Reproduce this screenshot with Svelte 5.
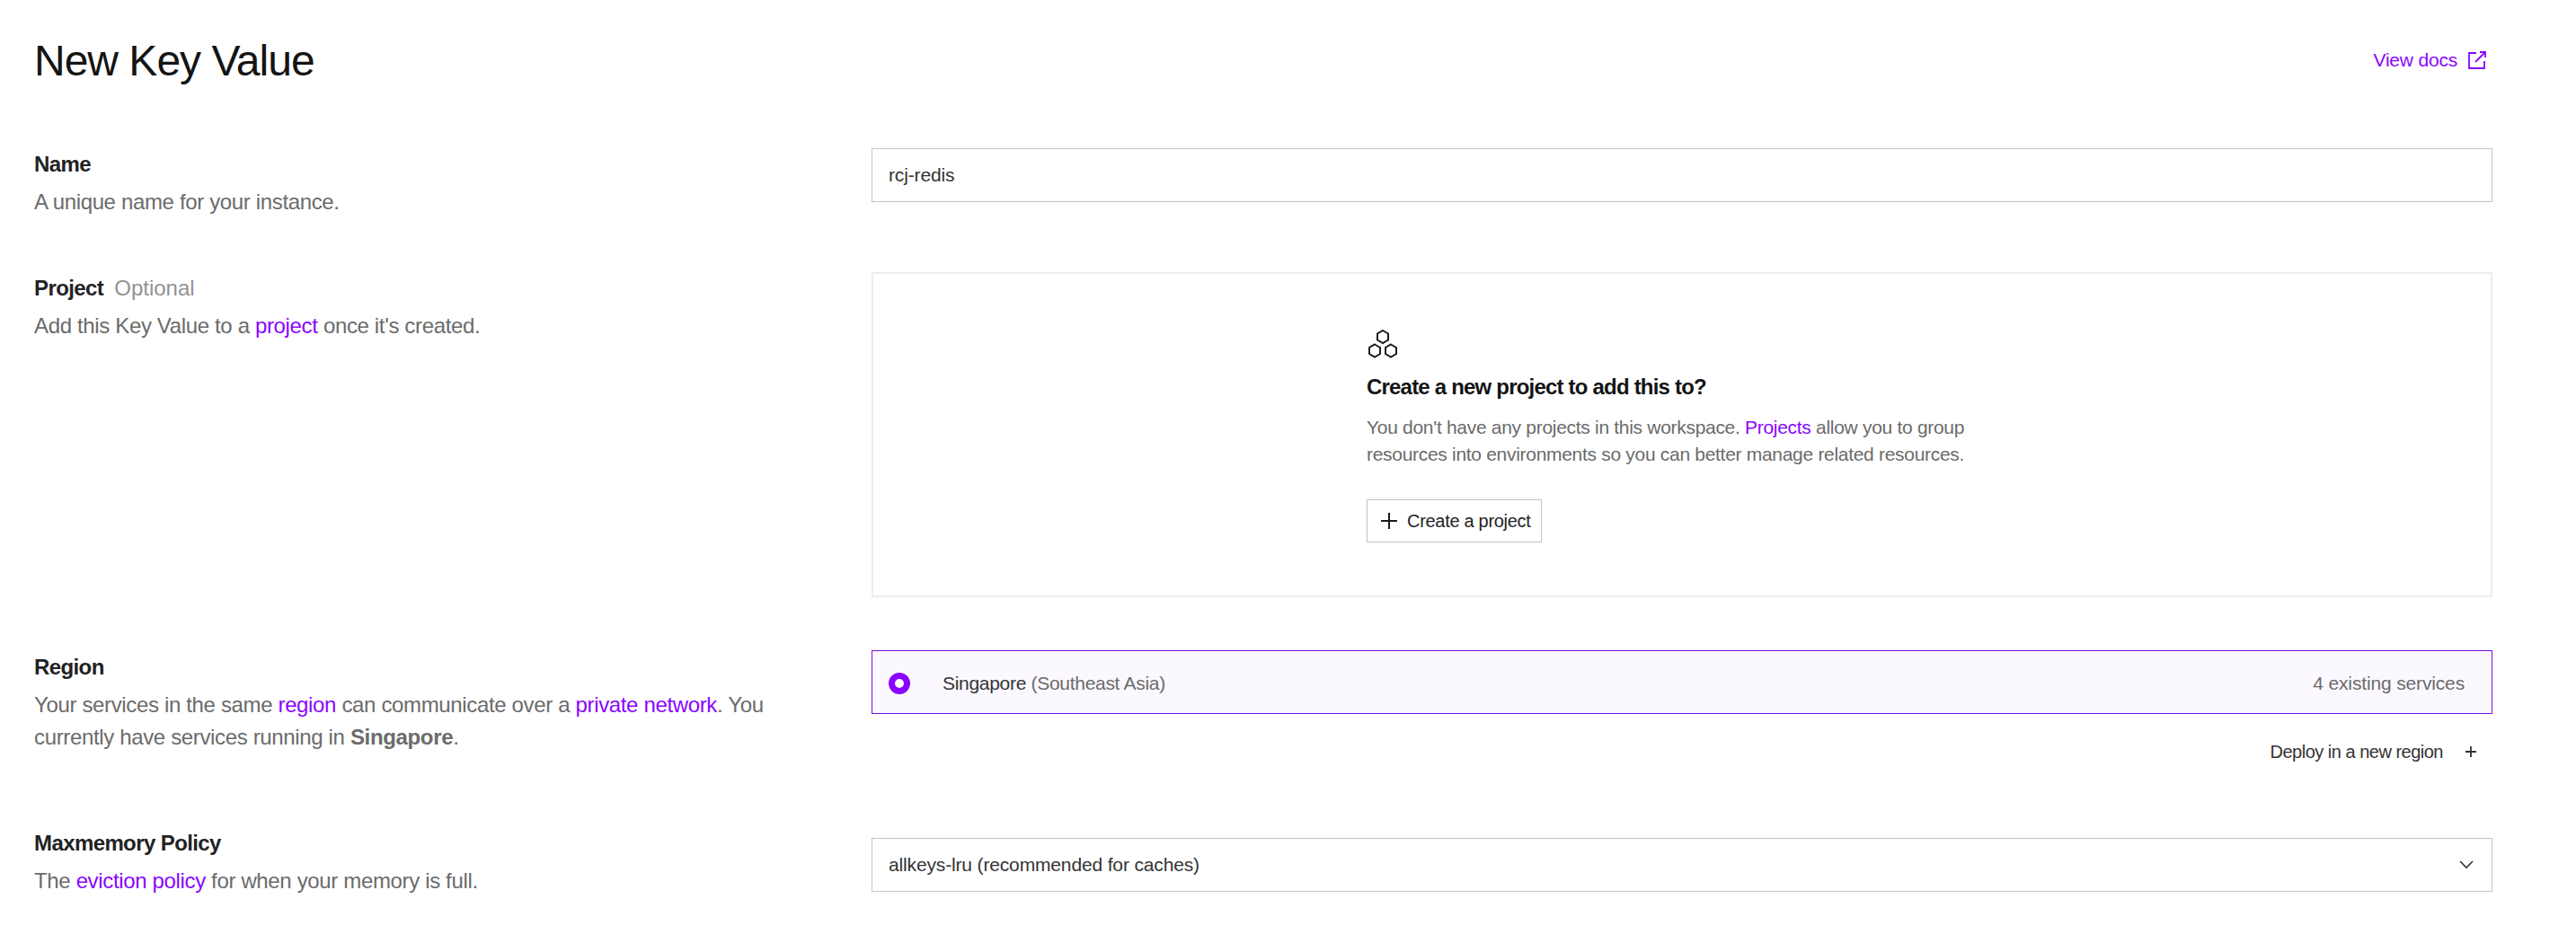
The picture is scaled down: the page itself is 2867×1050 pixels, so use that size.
<script>
  let name = $state('rcj-redis');
</script>

<main class="page">
  <header class="top">
    <h1>New Key Value</h1>
    <a class="docs" href="#docs">
      View docs
      <svg width="20" height="20" viewBox="0 0 20 20" fill="none" stroke="currentColor" stroke-width="1.8">
        <path d="M9 2H1v17h17v-8" />
        <path d="M8 12 19 1M13 1h6v6" />
      </svg>
    </a>
  </header>

  <section class="row">
    <div class="info">
      <h2>Name</h2>
      <p>A unique name for your instance.</p>
    </div>
    <input class="field" bind:value={name} />
  </section>

  <section class="row">
    <div class="info">
      <h2>Project <span class="optional">Optional</span></h2>
      <p>Add this Key Value to a <a href="#project">project</a> once it's created.</p>
    </div>
    <div class="panel">
      <svg class="hexes" width="34" height="32" viewBox="0 0 34 32" fill="none" stroke="#1a1a1a" stroke-width="2">
        <path d="M17 1l6 3.500v7L17 15l-6-3.500v-7z" />
        <path d="M8 16.500l6 3.500v7l-6 3.500L2 27v-7z" />
        <path d="M26 16.500l6 3.500v7l-6 3.500L20 27v-7z" />
      </svg>
      <h3>Create a new project to add this to?</h3>
      <p>You don't have any projects in this workspace. <a href="#projects">Projects</a> allow you to group<br />resources into environments so you can better manage related resources.</p>
      <button class="create">
        <svg width="18" height="18" viewBox="0 0 18 18" stroke="#1a1a1a" stroke-width="2"><path d="M9 0v18M0 9h18" /></svg>
        <span>Create a project</span>
      </button>
    </div>
  </section>

  <section class="row region-row">
    <div class="info">
      <h2>Region</h2>
      <p>Your services in the same <a href="#region">region</a> can communicate over a <a href="#network">private network</a>. You currently have services running in <strong>Singapore</strong>.</p>
    </div>
    <div>
      <div class="region">
        <span class="radio"></span>
        <span class="city">Singapore <span class="area">(Southeast Asia)</span></span>
        <span class="count">4 existing services</span>
      </div>
      <div class="deploy">
        Deploy in a new region
        <svg width="14" height="14" viewBox="0 0 14 14" stroke="#333" stroke-width="1.8"><path d="M7 1v12M1 7h12" /></svg>
      </div>
    </div>
  </section>

  <section class="row">
    <div class="info">
      <h2>Maxmemory Policy</h2>
      <p>The <a href="#eviction">eviction policy</a> for when your memory is full.</p>
    </div>
    <div class="field select">
      <span>allkeys-lru (recommended for caches)</span>
      <svg width="16" height="10" viewBox="0 0 16 10" fill="none" stroke="#333" stroke-width="1.6"><path d="M1 1l7 7 7-7" /></svg>
    </div>
  </section>
</main>

<style>
  :global(body) {
    background: #fff;
    font-family: 'Liberation Sans', Arial, sans-serif;
    color: #1a1a1a;
  }

  .page {
    padding: 38px 93px 0 38px;
    height: 1012px;
    overflow: hidden;
  }

  .top {
    display: flex;
    justify-content: space-between;
    align-items: center;
    height: 60px;
    margin-bottom: 67px;
  }

  h1 {
    margin: 0;
    font-size: 48px;
    line-height: 60px;
    font-weight: 400;
    letter-spacing: -1px;
    color: #141414;
  }

  a {
    color: #8a05ff;
    text-decoration: none;
  }

  .docs {
    display: flex;
    align-items: center;
    gap: 12px;
    margin: 0 7px 3px 0;
    font-size: 21px;
    letter-spacing: -0.2px;
  }

  .row {
    display: grid;
    grid-template-columns: 932px 1fr;
    margin-bottom: 60px;
  }

  .info {
    font-size: 24px;
    line-height: 36px;
  }

  h2 {
    margin: 0;
    font-size: 24px;
    line-height: 36px;
    font-weight: 700;
    letter-spacing: -0.6px;
    color: #222;
  }

  .optional {
    margin-left: 6px;
    font-weight: 400;
    letter-spacing: 0;
    color: #929292;
  }

  .info p {
    margin: 6px 0 0;
    max-width: 860px;
    color: #6b6b6b;
    letter-spacing: -0.35px;
  }

  strong {
    font-weight: 700;
  }

  .field {
    box-sizing: border-box;
    width: 100%;
    height: 60px;
    padding: 0 18px;
    border: 1px solid #c4c4c4;
    background: #fff;
    font: inherit;
    font-size: 21px;
    letter-spacing: -0.15px;
    color: #333;
    outline: none;
  }

  .panel {
    box-sizing: border-box;
    height: 362px;
    margin-bottom: -1px;
    padding: 62px 0 0 549px;
    border: 2px solid #ececec;
  }

  .hexes {
    display: block;
    margin: 0 0 14px 1px;
  }

  h3 {
    margin: 0 0 12px;
    font-size: 24px;
    line-height: 36px;
    font-weight: 700;
    letter-spacing: -0.8px;
    color: #141414;
  }

  .panel p {
    margin: 0 0 35px;
    font-size: 21px;
    line-height: 30px;
    letter-spacing: -0.3px;
    color: #6b6b6b;
  }

  .create {
    display: flex;
    align-items: center;
    gap: 11px;
    box-sizing: border-box;
    height: 48px;
    width: 195px;
    padding: 0 15px;
    border: 1px solid #c4c4c4;
    background: #fff;
    font: inherit;
    font-size: 20px;
    letter-spacing: -0.3px;
    color: #222;
    white-space: nowrap;
  }

  .create svg {
    flex-shrink: 0;
  }

  .region-row {
    margin-bottom: 61px;
  }

  .region-row .info {
    padding-top: 1px;
  }

  .region {
    display: flex;
    align-items: center;
    box-sizing: border-box;
    height: 71px;
    padding: 3px 30px 0 18px;
    border: 1px solid #7c10e6;
    background: #fbf9ff;
    font-size: 21px;
    color: #333;
  }

  .radio {
    box-sizing: border-box;
    width: 24px;
    height: 24px;
    margin-right: 36px;
    border: 7px solid #8a05ff;
    border-radius: 50%;
    background: #fff;
  }

  .city {
    letter-spacing: -0.3px;
  }

  .area {
    color: #6b6b6b;
  }

  .count {
    margin-left: auto;
    letter-spacing: -0.15px;
    color: #6b6b6b;
  }

  .deploy {
    display: flex;
    justify-content: flex-end;
    align-items: center;
    gap: 24px;
    height: 44px;
    margin-top: 20px;
    padding: 0 17px 1px 0;
    font-size: 20px;
    letter-spacing: -0.5px;
    color: #333;
  }

  .select {
    display: flex;
    justify-content: space-between;
    align-items: center;
    margin-top: 12px;
    padding-right: 20px;
  }
</style>
